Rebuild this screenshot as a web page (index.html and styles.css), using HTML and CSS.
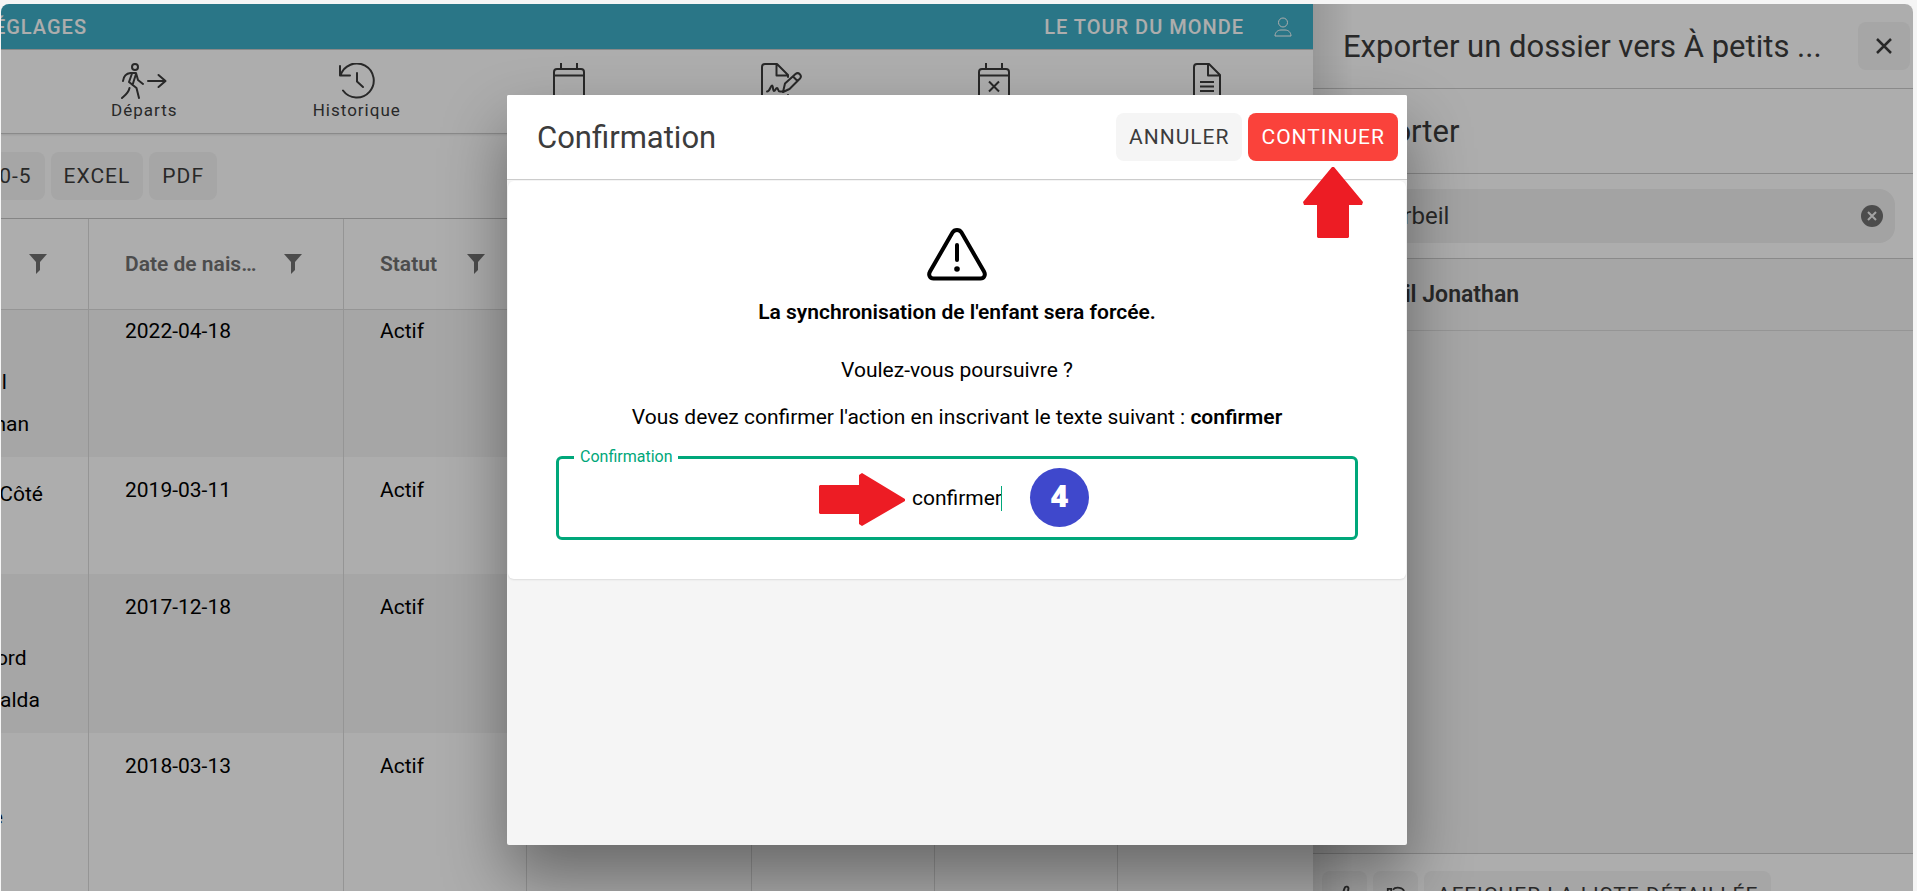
FILE: index.html
```html
<!DOCTYPE html>
<html lang="fr">
<head>
  <meta charset="UTF-8">
  <meta name="viewport" content="width=device-width, initial-scale=1.0">
  <title>Le tour du monde</title>
  <link rel="stylesheet" href="styles.css">
</head>
<body>
  <div class="app">
    <main class="main">
      <header class="navbar">
        <nav class="nav-links">
          <a href="#">RÉGLAGES</a>
        </nav>
        <a href="#" class="account">
          LE TOUR DU MONDE
          <svg width="18" height="20" viewBox="0 0 18 20" fill="none" stroke="currentColor">
            <circle cx="9" cy="5.5" r="4.5"/>
            <path d="M1 19c0-3.5 2.500-6 6-6h4c3.500 0 6 2.500 6 6z"/>
          </svg>
        </a>
      </header>

      <nav class="toolbar">
        <a href="#" class="tool">
          <svg width="46" height="36" viewBox="0 0 46 36" fill="none" stroke="currentColor" stroke-width="2" stroke-linecap="round" stroke-linejoin="round">
            <circle cx="14" cy="4" r="3"/>
            <path d="M2 18c.5-4 3-7.500 7.500-8h5.500l2 7 5 4M11 10.500L8 19l7.500 6L18 35M15 11l-3.500 11M8.500 25c-1 5-4 7-7.500 10"/>
            <path d="M27 18h17M37.500 12l7 6-7 6"/>
          </svg>
          Départs
        </a>
        <a href="#" class="tool">
          <svg width="38" height="36" viewBox="0 0 38 36" fill="none" stroke="currentColor" stroke-width="2" stroke-linecap="round" stroke-linejoin="round">
            <path d="M2 3v9.500h10M2.500 12.500A17 17 0 1 1 5 27.500"/>
            <path d="M19 10v8.500l6 5.500"/>
          </svg>
          Historique
        </a>
        <a href="#" class="tool">
          <svg width="32" height="36" viewBox="0 0 32 36" fill="none" stroke="currentColor" stroke-width="2">
            <rect x="1" y="6" width="30" height="29" rx="3"/>
            <path d="M1 12.500h30M8 0v6M24 0v6"/>
          </svg>
          Présences
        </a>
        <a href="#" class="tool">
          <svg width="42" height="36" viewBox="0 0 42 36" fill="none" stroke="currentColor" stroke-width="2" stroke-linecap="round" stroke-linejoin="round">
            <path d="M27 32v3H4a3 3 0 0 1-3-3V4a3 3 0 0 1 3-3h12l11 11v2M15.500 1v11.500h11"/>
            <path d="M22 29l2-8.500L34.500 11c3-2.500 7 1.500 4.500 4.500L28.500 26zM32 13.500l4.500 4.500"/>
            <path d="M6 28.500c3 0 3.500-6 5-6s.5 5.500 2 5.500 1.500-3 3-3 .5 3.500 3 3.500h3"/>
          </svg>
          Signatures
        </a>
        <a href="#" class="tool">
          <svg width="32" height="36" viewBox="0 0 32 36" fill="none" stroke="currentColor" stroke-width="2">
            <rect x="1" y="6" width="30" height="29" rx="3"/>
            <path d="M1 12.500h30M8 0v6M24 0v6M11 18.500l10 10M21 18.500l-10 10"/>
          </svg>
          Absences
        </a>
        <a href="#" class="tool">
          <svg width="28" height="36" viewBox="0 0 28 36" fill="none" stroke="currentColor" stroke-width="2" stroke-linejoin="round">
            <path d="M4 1h12l11 11v20a3 3 0 0 1-3 3H4a3 3 0 0 1-3-3V4a3 3 0 0 1 3-3zM15 1v11.500h12"/>
            <path d="M7 19h14M7 23.500h14M7 28h14"/>
          </svg>
          Rapports
        </a>
      </nav>

      <div class="exports">
        <div class="exports-inner">
          <button type="button" class="btn">GROUPE 0-5</button>
          <button type="button" class="btn">EXCEL</button>
          <button type="button" class="btn">PDF</button>
        </div>
      </div>

      <div class="table-wrap">
        <table class="children">
          <colgroup>
            <col class="col-name">
            <col class="col-birth">
            <col class="col-status">
            <col class="col-wide">
            <col class="col-status">
            <col class="col-status">
            <col>
          </colgroup>
          <thead>
            <tr>
              <th><div class="th"><span>Nom</span><svg class="filter" width="18" height="20" viewBox="0 0 18 20"><path d="M0 0h18l-7 8v8l-4 4V8z"/></svg></div></th>
              <th><div class="th"><span>Date de naissance</span><svg class="filter" width="18" height="20" viewBox="0 0 18 20"><path d="M0 0h18l-7 8v8l-4 4V8z"/></svg></div></th>
              <th><div class="th"><span>Statut</span><svg class="filter" width="18" height="20" viewBox="0 0 18 20"><path d="M0 0h18l-7 8v8l-4 4V8z"/></svg></div></th>
              <th></th>
              <th></th>
              <th></th>
              <th></th>
            </tr>
          </thead>
          <tbody>
            <tr>
              <td><div class="id">12</div><div>Corbeil</div><div>Jonathan</div></td>
              <td>2022-04-18</td>
              <td>Actif</td>
              <td></td><td></td><td></td><td></td>
            </tr>
            <tr>
              <td><div class="id">Marie Côté</div><div>Léa</div></td>
              <td>2019-03-11</td>
              <td>Actif</td>
              <td></td><td></td><td></td><td></td>
            </tr>
            <tr>
              <td><div class="id">14</div><div>Crawford</div><div>Esmeralda</div></td>
              <td>2017-12-18</td>
              <td>Actif</td>
              <td></td><td></td><td></td><td></td>
            </tr>
            <tr>
              <td><div class="id">15</div><div>Louise</div><div>Roy</div></td>
              <td>2018-03-13</td>
              <td>Actif</td>
              <td></td><td></td><td></td><td></td>
            </tr>
            <tr>
              <td><div class="id">16</div></td>
              <td></td><td></td><td></td><td></td><td></td><td></td>
            </tr>
          </tbody>
        </table>
      </div>
    </main>

    <aside class="panel">
      <div class="bar">
        <h2 class="title">Exporter un dossier vers À petits ...</h2>
        <button type="button" class="btn btn-close" aria-label="Fermer">
          <svg width="16" height="16" viewBox="0 0 16 16" fill="none" stroke="currentColor" stroke-width="2.500"><path d="M1 1l14 14M15 1L1 15"/></svg>
        </button>
      </div>
      <div class="bar">
        <h2 class="title">Exporter</h2>
      </div>
      <div class="bar search">
        <input type="text" value="Corbeil" aria-label="Rechercher">
        <button type="button" class="clear" aria-label="Effacer">
          <svg width="22" height="22" viewBox="0 0 22 22"><circle cx="11" cy="11" r="11" fill="#717171"/><path d="M7 7l8 8M15 7l-8 8" stroke="#f0f0f0" stroke-width="2"/></svg>
        </button>
      </div>
      <ul class="results">
        <li>Corbeil Jonathan</li>
      </ul>
      <div class="panel-footer">
        <button type="button" class="btn btn-icon" aria-label="Modifier">
          <svg width="20" height="20" viewBox="0 0 20 20" fill="none" stroke="currentColor" stroke-width="2"><path d="M7 12l3-9c1-3 5-2 4 1l-1 8v4"/></svg>
        </button>
        <button type="button" class="btn btn-icon" aria-label="Actualiser">
          <svg width="22" height="20" viewBox="0 0 22 20" fill="none" stroke="currentColor" stroke-width="2"><path d="M2 3v8h4V3zM8 4c3-4 13-3 13 3s-6 11-11 11"/></svg>
        </button>
        <button type="button" class="btn">AFFICHER LA LISTE DÉTAILLÉE</button>
      </div>
    </aside>

    <div class="backdrop">
      <div class="dialog" role="dialog" aria-labelledby="dialogTitle">
        <div class="dialog-header">
          <h1 class="title" id="dialogTitle">Confirmation</h1>
          <button type="button" class="btn">ANNULER</button>
          <button type="button" class="btn btn-danger">CONTINUER</button>
        </div>
        <div class="dialog-content">
          <svg class="warning" width="60" height="54" viewBox="0 0 60 54" fill="none" stroke="currentColor" stroke-width="4" stroke-linecap="round" stroke-linejoin="round">
            <path d="M25.500 4.500c2-3.300 7-3.300 9 0l22.500 39c2 3.500 0 7-3.500 7h-47c-3.500 0-5.500-3.500-3.500-7z"/>
            <path d="M30 17v15"/>
            <circle cx="30" cy="41" r="2.800" fill="currentColor" stroke="none"/>
          </svg>
          <p class="lead"><strong>La synchronisation de l'enfant sera forcée.</strong></p>
          <p>Voulez-vous poursuivre ?</p>
          <p>Vous devez confirmer l'action en inscrivant le texte suivant : <strong>confirmer</strong></p>
          <div class="field">
            <label for="confirmation">Confirmation</label>
            <input type="text" id="confirmation" value="confirmer">
            <span class="caret"></span>
            <svg class="arrow-right" width="86" height="53" viewBox="0 0 86 53"><path d="M1 12h39V2l3-2 43 26v2L43 53l-3-2V41H1l-1-1V13z"/></svg>
            <span class="step">4</span>
          </div>
        </div>
        <svg class="arrow-up" width="60" height="71" viewBox="0 0 60 71"><path d="M29 0h2l29 35-1 3H46v32l-1 1H15l-1-1V38H1l-1-3z"/></svg>
      </div>
    </div>
  </div>
</body>
</html>
```
FILE: styles.css
```css
* {
  box-sizing: border-box;
}
body {
  margin: 0;
  padding: 4px 4px 0 1px;
  height: 100vh;
  overflow: hidden;
  background: #f5f5f5;
  color: #000;
  font-family: Roboto, "Liberation Sans", sans-serif;
  font-size: 21px;
}
a {
  color: inherit;
  text-decoration: none;
}
input, button {
  font: inherit;
  color: inherit;
}

/* the frame runs a little below the window */
.app {
  position: relative;
  display: flex;
  height: calc(100vh + 41px);
  overflow: hidden;
  border-radius: 8px;
  background: #fff;
}
.main {
  flex: 1;
  min-width: 0;
  display: flex;
  flex-direction: column;
  overflow: hidden;
}

/* top bar */
.navbar {
  display: flex;
  align-items: center;
  justify-content: space-between;
  height: 46px;
  flex: none;
  padding-right: 21px;
  border-bottom: 1px solid #ccc;
  background: #3fafc7;
  color: #fff;
  font-size: 20px;
  font-weight: 500;
  letter-spacing: 1px;
}
.nav-links {
  display: flex;
  justify-content: flex-end;
  width: 86px;
}
.account {
  display: flex;
  align-items: center;
  gap: 30px;
}
.toolbar {
  display: flex;
  flex: none;
  height: 84px;
  padding: 13px 0 0 37px;
  border-bottom: 1px solid #ccc;
  box-shadow: 0 1px 2px rgba(0, 0, 0, 0.1);
}
.tool {
  flex: 1;
  display: flex;
  flex-direction: column;
  align-items: center;
  color: #3c3c3c;
  font-size: 17px;
  line-height: 22px;
  letter-spacing: 1px;
}

/* buttons */
.btn {
  display: flex;
  align-items: center;
  justify-content: center;
  flex: none;
  height: 48px;
  padding: 0 13px;
  border: none;
  border-radius: 8px;
  background: #f5f5f5;
  color: #3c3c3c;
  letter-spacing: 1px;
  cursor: pointer;
}
.btn-danger {
  background: #fa423b;
  color: #fff;
}
.btn-close {
  width: 52px;
}
.btn-icon {
  width: 45px;
}
.exports {
  flex: none;
  display: flex;
  align-items: center;
  height: 85px;
  border-bottom: 1px solid #c4c4c4;
}
.exports-inner {
  display: flex;
  justify-content: flex-end;
  gap: 6px;
  width: 216px;
}

/* table, scrolled part of the way across and down */
.table-wrap {
  flex: 1;
  min-height: 0;
  overflow: hidden;
}
.children {
  width: calc(100% + 96px);
  margin-left: -96px;
  table-layout: fixed;
  border-collapse: separate;
  border-spacing: 0;
}
.col-name {
  width: 184px;
}
.col-birth {
  width: 255px;
}
.col-status {
  width: 183px;
}
.col-wide {
  width: 225px;
}
th, td {
  padding: 12px 0 12px 36px;
  border-right: 1px solid #dcdcdc;
  text-align: left;
  vertical-align: top;
  line-height: 42px;
}
th {
  height: 91px;
  padding: 0 41px 0 36px;
  border-bottom: 1px solid #dcdcdc;
  color: #717171;
  font-weight: 600;
  vertical-align: middle;
}
th:last-child, td:last-child {
  border-right: none;
}
.th {
  display: flex;
  align-items: center;
  justify-content: space-between;
  gap: 24px;
}
.th span {
  overflow: hidden;
  text-overflow: ellipsis;
  white-space: nowrap;
}
.filter {
  flex: none;
  fill: #717171;
}
tbody tr:nth-child(odd) {
  background: #f5f5f5;
}
tbody tr:first-child td {
  padding-top: 0;
}
.id {
  line-height: 51px;
}

/* side panel */
.panel {
  position: relative;
  display: flex;
  flex-direction: column;
  width: 600px;
  background: #fff;
  color: #3c3c3c;
}
.panel::before {
  content: "";
  position: absolute;
  z-index: 1;
  top: 0;
  bottom: 0;
  left: 0;
  width: 40px;
  background: linear-gradient(to right, rgba(0, 0, 0, 0.12), transparent);
}
.bar {
  display: flex;
  align-items: center;
  flex: none;
  height: 85px;
  padding: 0 3px 0 30px;
  border-bottom: 1px solid #ccc;
}
.title {
  flex: 1;
  margin: 0;
  color: #3c3c3c;
  font-size: 31px;
  font-weight: 400;
  white-space: nowrap;
}
.search {
  position: relative;
  padding: 0 18px;
}
.search input {
  width: 100%;
  height: 54px;
  padding: 0 48px 0 43px;
  border: none;
  border-radius: 16px;
  background: #f0f0f0;
  font-size: 24px;
}
.clear {
  position: absolute;
  right: 30px;
  display: flex;
  padding: 0;
  border: none;
  background: none;
}
.results {
  flex: 1;
  margin: 0;
  padding: 0;
  border-bottom: 1px solid #ccc;
  background: #f5f5f5;
  list-style: none;
}
.results li {
  padding: 0 30px;
  border-bottom: 1px solid #dcdcdc;
  font-size: 23px;
  font-weight: 600;
  line-height: 71px;
}
.panel-footer {
  display: flex;
  align-items: center;
  gap: 6px;
  height: 82px;
  padding: 0 9px;
}

/* confirmation dialog */
.backdrop {
  position: absolute;
  z-index: 2;
  inset: 0;
  display: flex;
  align-items: center;
  justify-content: center;
  background: rgba(0, 0, 0, 0.32);
}
.dialog {
  position: relative;
  width: 900px;
  height: 750px;
  border-radius: 2px;
  background: #f5f5f5;
  box-shadow: 0 32px 64px rgba(0, 0, 0, 0.4);
}
.dialog-header {
  display: flex;
  align-items: center;
  gap: 6px;
  height: 85px;
  padding: 0 9px 0 30px;
  border-bottom: 1px solid #ccc;
  border-radius: 2px 2px 0 0;
  background: #fff;
}
.dialog-content {
  display: flex;
  flex-direction: column;
  align-items: center;
  margin: 1px;
  padding: 47px 48px 39px;
  border-radius: 6px;
  background: #fff;
  box-shadow: 0 1px 2px rgba(0, 0, 0, 0.1);
  text-align: center;
}
.dialog-content p {
  margin: 0 0 15px;
  line-height: 32px;
}
.dialog-content .lead {
  margin: 14px 0 26px;
}
strong {
  font-weight: 600;
}
.field {
  position: relative;
  width: 100%;
  margin-top: 8px;
}
.field label {
  position: absolute;
  top: -11px;
  left: 18px;
  padding: 0 6px;
  background: #fff;
  color: #00a77a;
  font-size: 16px;
  line-height: 24px;
}
.field input {
  display: block;
  width: 100%;
  height: 84px;
  border: 3px solid #00a77a;
  border-radius: 6px;
  background: #fff;
  text-align: center;
  outline: none;
}
.caret {
  position: absolute;
  top: 30px;
  left: calc(50% + 44px);
  width: 1px;
  height: 25px;
  background: #00a77a;
}

/* guide marks */
.arrow-right, .arrow-up {
  position: absolute;
  fill: #ed1c24;
}
.arrow-right {
  top: 17px;
  left: calc(50% - 138px);
}
.arrow-up {
  top: 72px;
  right: 44px;
}
.step {
  position: absolute;
  top: 12px;
  left: calc(50% + 73px);
  width: 59px;
  height: 59px;
  border-radius: 50%;
  background: #3f48cc;
  color: #fff;
  font-family: "Open Sans", sans-serif;
  font-size: 30px;
  font-weight: 800;
  line-height: 56px;
  text-align: center;
}
```
